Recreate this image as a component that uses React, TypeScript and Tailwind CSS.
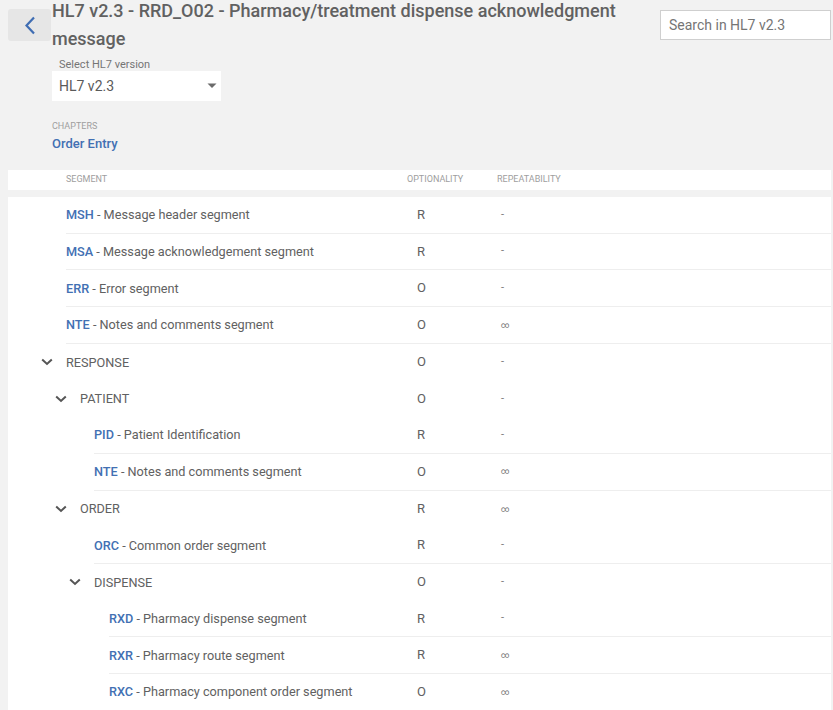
import React from "react";

type Row = {
  lvl: 0 | 1 | 2 | 3;
  group?: boolean;
  code?: string;
  desc: string;
  opt: string;
  rep: string;
};

const rows: Row[] = [
  { lvl: 0, code: "MSH", desc: "Message header segment", opt: "R", rep: "-" },
  { lvl: 0, code: "MSA", desc: "Message acknowledgement segment", opt: "R", rep: "-" },
  { lvl: 0, code: "ERR", desc: "Error segment", opt: "O", rep: "-" },
  { lvl: 0, code: "NTE", desc: "Notes and comments segment", opt: "O", rep: "∞" },
  { lvl: 0, group: true, desc: "RESPONSE", opt: "O", rep: "-" },
  { lvl: 1, group: true, desc: "PATIENT", opt: "O", rep: "-" },
  { lvl: 2, code: "PID", desc: "Patient Identification", opt: "R", rep: "-" },
  { lvl: 2, code: "NTE", desc: "Notes and comments segment", opt: "O", rep: "∞" },
  { lvl: 1, group: true, desc: "ORDER", opt: "R", rep: "∞" },
  { lvl: 2, code: "ORC", desc: "Common order segment", opt: "R", rep: "-" },
  { lvl: 2, group: true, desc: "DISPENSE", opt: "O", rep: "-" },
  { lvl: 3, code: "RXD", desc: "Pharmacy dispense segment", opt: "R", rep: "-" },
  { lvl: 3, code: "RXR", desc: "Pharmacy route segment", opt: "R", rep: "∞" },
  { lvl: 3, code: "RXC", desc: "Pharmacy component order segment", opt: "O", rep: "∞" },
];

const spacer = ["w-[58px]", "w-[72px]", "w-[86px]", "w-[101px]"];
const segW = ["w-[341px]", "w-[327px]", "w-[313px]", "w-[298px]"];

function Chevron() {
  return (
    <svg width="12" height="8" viewBox="0 0 12 8" className="block">
      <path d="M1.2 1.5 L6 6 L10.8 1.5" fill="none" stroke="#555" strokeWidth="2" />
    </svg>
  );
}

export default function App() {
  return (
    <div
      className="min-h-screen bg-[#f2f2f2] text-[#616161]"
      style={{ fontFamily: "Roboto, 'Liberation Sans', sans-serif" }}
    >
      {/* Top area */}
      <div className="flex items-start gap-5 pr-[2px]">
        <div className="flex flex-1 items-start">
          <button className="ml-2 mt-[9px] flex h-[32px] w-[43px] shrink-0 items-center justify-center rounded-[3px] bg-[#e6e6e6]">
            <svg width="12" height="19" viewBox="0 0 12 19">
              <path d="M10 1.5 L2.5 9.5 L10 17.5" fill="none" stroke="#3f6db3" strokeWidth="2.2" />
            </svg>
          </button>
          <div className="ml-[1px] flex-1">
            <h1 className="mt-[-3px] text-[18px] font-medium leading-[28px] text-[#616161]">
              HL7 v2.3 - RRD_O02 - Pharmacy/treatment dispense acknowledgment message
            </h1>
            <div className="mt-[6px] pl-[7px] text-[11px] leading-[12px] text-[#757575]">
              Select HL7 version
            </div>
            <div className="flex h-[30px] w-[169px] items-center justify-between bg-white pl-[7px] pr-[4px]">
              <span className="text-[14px] text-[#5a5a5a]">HL7 v2.3</span>
              <svg width="10" height="6" viewBox="0 0 10 6">
                <path d="M0.5 0.5 L9.5 0.5 L5 5 Z" fill="#6b6b6b" />
              </svg>
            </div>
            <div className="mt-[19px] text-[9px] uppercase leading-[12px] text-[#9e9e9e]">
              Chapters
            </div>
            <div className="mt-[4px] text-[13px] font-medium leading-[16px] text-[#4270b3]">
              Order Entry
            </div>
          </div>
        </div>
        <div className="mt-[10px] flex h-[30px] w-[171px] items-center border border-[#cfcfcf] bg-white px-[8px]">
          <span className="text-[14px] text-[#757575]">Search in HL7 v2.3</span>
        </div>
      </div>

      {/* Table */}
      <div className="ml-2 mr-[2px] mt-[18px]">
        <div className="flex h-[20px] items-center bg-white text-[9px] uppercase text-[#9e9e9e]">
          <div className="w-[58px]" />
          <div className="w-[341px]">Segment</div>
          <div className="w-[90px]">Optionality</div>
          <div className="flex-1">Repeatability</div>
        </div>
        <div className="mt-[7px] bg-white">
          {rows.map((r, i) => (
            <div key={i} className="flex h-[36.7px]">
              <div className={`${spacer[r.lvl]} flex shrink-0 items-center justify-end pr-[13px]`}>
                {r.group ? <Chevron /> : null}
              </div>
              <div
                className={`flex flex-1 items-center ${
                  r.group ? "" : "border-b border-[#eeeeee]"
                }`}
              >
                <div className={`${segW[r.lvl]} shrink-0 text-[12.7px] text-[#616161]`}>
                  {r.group ? (
                    <span>{r.desc}</span>
                  ) : (
                    <span>
                      <span className="font-medium text-[#4270b3]">{r.code}</span> - {r.desc}
                    </span>
                  )}
                </div>
                <div className="w-[90px] shrink-0 pl-[10px] text-[13px] text-[#616161]">{r.opt}</div>
                <div className="flex-1 pl-[4px] text-[11px] text-[#7a7a7a]">
                  {r.rep === "∞" ? <span className="text-[8.5px]">∞</span> : r.rep}
                </div>
              </div>
            </div>
          ))}
        </div>
      </div>
    </div>
  );
}
